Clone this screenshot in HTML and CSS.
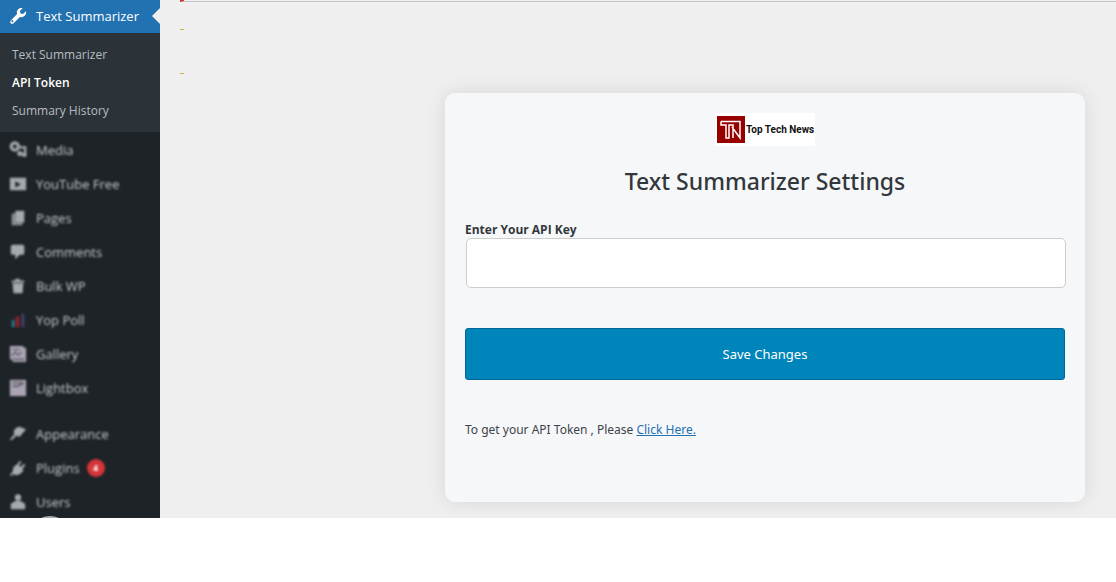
FILE: index.html
```html
<!DOCTYPE html>
<html lang="en">
<head>
<meta charset="utf-8">
<meta name="viewport" content="width=device-width, initial-scale=1">
<title>Text Summarizer Settings</title>
<link rel="stylesheet" href="styles.css">
</head>
<body>
<div class="shell">
  <nav class="sidebar" aria-label="Admin menu">
    <a class="current" href="#summarizer">
      <svg class="icon" viewBox="0 0 20 20"><path fill="currentColor" d="M16.7 9.8c-1.300 1.300-3.200 1.700-4.800 1.100L5.600 17.200c-.8.800-2 .8-2.800 0s-.8-2 0-2.800L9.100 8.100C8.500 6.500 8.800 4.600 10.200 3.300c1.200-1.300 3-1.700 4.600-1.200l-2.900 2.900.6 2.500 2.500.6L17.900 5.200c.5 1.600.1 3.400-1.200 4.600zM4.900 15.900a1 1 0 1 0-1.500-.8 1 1 0 0 0 1.500.8z"/></svg>
      <span>Text Summarizer</span>
    </a>
    <ul class="submenu">
      <li><a href="#summarizer">Text Summarizer</a></li>
      <li><a class="active" href="#token">API Token</a></li>
      <li><a href="#history">Summary History</a></li>
    </ul>
    <ul class="menu">
      <li><a href="#media"><svg class="icon" viewBox="0 0 20 20"><g fill="none" stroke="currentColor"><circle cx="6.500" cy="6" r="4" stroke-width="3.500"/><path stroke-width="2.500" d="M12 7h6v9h-3"/></g><circle cx="12" cy="14" r="2.800" fill="currentColor"/><circle cx="17" cy="15" r="2.500" fill="currentColor"/></svg><span>Media</span></a></li>
      <li><a href="#youtube"><svg class="icon" viewBox="0 0 20 20"><path fill="currentColor" fill-rule="evenodd" d="M1 3h18v14H1zM7 7v7l6-3.500z"/></svg><span>YouTube Free</span></a></li>
      <li><a href="#pages"><svg class="icon" viewBox="0 0 20 20"><path fill="currentColor" d="M7 2h10v13H7z"/><path fill="currentColor" opacity=".8" d="M3 5h4v10h8v3H3z"/></svg><span>Pages</span></a></li>
      <li><a href="#comments"><svg class="icon" viewBox="0 0 20 20"><path fill="currentColor" d="M4 2h11c1 0 2 1 2 2v7c0 1-1 2-2 2h-3l-5 5v-5H4c-1 0-2-1-2-2V4c0-1 1-2 2-2z"/></svg><span>Comments</span></a></li>
      <li><a href="#bulk"><svg class="icon" viewBox="0 0 20 20"><path fill="currentColor" d="M7 2h5v2h5v2H3V4h4zM4 7h12l-1 11H5z"/></svg><span>Bulk WP</span></a></li>
      <li><a href="#poll"><svg class="icon" viewBox="0 0 20 20"><path fill="#287a96" d="M3 10h3v8H3z"/><path fill="#7d232d" d="M7 6h5v12H7z"/><path fill="#44446a" d="M14 3h3v15h-3z"/></svg><span>Yop Poll</span></a></li>
      <li><a href="#gallery"><svg class="icon" viewBox="0 0 20 20"><path fill="#aaa4b3" d="M1 1h15v2h3v16H4v-3H1z"/><path stroke="#515159" stroke-width="1.300" fill="none" d="m3 12 4-4 3 3 4-3M4 5h8M5 16h12"/></svg><span>Gallery</span></a></li>
      <li><a href="#lightbox"><svg class="icon" viewBox="0 0 20 20"><path fill="#aaa4b3" d="M1 1h18v18H1z"/><path stroke="#515159" stroke-width="1.500" fill="none" d="M4 4h12M4 8h6l3-2h3"/></svg><span>Lightbox</span></a></li>
    </ul>
    <ul class="menu menu-last">
      <li><a href="#appearance"><svg class="icon" viewBox="0 0 20 20"><path fill="currentColor" d="m8 3 4-1 7 3-3 3-4 5-4-1-5 5-2-1 5-6-1-3z"/></svg><span>Appearance</span></a></li>
      <li><a href="#plugins"><svg class="icon" viewBox="0 0 20 20"><path fill="currentColor" d="m12 2 2 1-3 4 2 2 4-4 1 2-3 4 1 2-4 4-4 1-3-1-3 2-1-1 3-4 1-5 5-4z"/></svg><span>Plugins</span><b class="badge">4</b></a></li>
      <li><a href="#users"><svg class="icon" viewBox="0 0 20 20"><circle cx="10" cy="5" r="3.500" fill="currentColor"/><path fill="currentColor" d="M7 9h6l5 3v6H2v-6z"/></svg><span>Users</span></a></li>
    </ul>
    <span class="next-item"></span>
  </nav>
  <main class="content">
    <div class="notice-error"></div>
    <div class="notice-warning"></div>
    <form class="card">
      <svg class="logo" viewBox="0 0 100 33" role="img" aria-label="Top Tech News">
        <path fill="#fff" d="M0 0h100v33H0z"/>
        <path fill="#980000" d="M2 3h28v27H2z"/>
        <path fill="none" stroke="#fff" stroke-width="1.500" d="M6 8.500h19V25l-8-11M6 8.500V12h5v13h3V12h4v13M25 8v17"/>
        <text class="logo-text" x="31" y="20">Top Tech News</text>
      </svg>
      <h1>Text Summarizer Settings</h1>
      <label for="api-key">Enter Your API Key</label>
      <input id="api-key" type="text">
      <button type="button">Save Changes</button>
      <p>To get your API Token , Please <a href="#get-token">Click Here.</a></p>
    </form>
  </main>
</div>
</body>
</html>
```
FILE: styles.css
```css
* { box-sizing: border-box; }
body {
  margin: 0;
  background: #fff;
  color: #3c434a;
  font: 13px/20px "Segoe UI", "Open Sans", sans-serif;
}
ul { list-style: none; margin: 0; padding: 0; }
.shell {
  display: flex;
  height: calc(100vh - 64px);
  overflow: hidden;
  background: #efefef;
}
.sidebar {
  flex: 0 0 160px;
  background: #1d2327;
  overflow: hidden;
}
.sidebar a { text-decoration: none; }
.current {
  position: relative;
  display: flex;
  align-items: center;
  gap: 8px;
  height: 33px;
  padding: 0 8px 2px;
  background: #2271b1;
  color: #fff;
}
.current::after {
  content: "";
  position: absolute;
  right: 0;
  top: 8px;
  border: 8px solid transparent;
  border-left: 0;
  border-right-color: #efefef;
}
.icon { width: 20px; height: 20px; flex: none; }
.submenu { padding: 8px 12px 7px; background: #2c3338; }
.submenu a { display: block; line-height: 28px; color: #b5bcc2; font-size: 12px; }
.submenu .active { color: #fff; font-weight: 600; }
.menu { padding-top: 1px; }
.menu a {
  display: flex;
  align-items: center;
  gap: 8px;
  height: 34px;
  padding: 0 8px;
  color: #c8cbce;
}
.menu .icon { padding: 1px; filter: blur(1px); color: #a7aaad; }
.menu span { filter: blur(1px); }
.menu-last { margin-top: 11px; }
.badge {
  width: 18px;
  margin-left: -1px;
  border-radius: 9px;
  background: #d63638;
  color: #fff;
  font-size: 9px;
  line-height: 18px;
  text-align: center;
  filter: blur(1px);
}
.next-item {
  display: block;
  width: 24px;
  height: 12px;
  margin: -3px 0 0 38px;
  border-radius: 50%;
  background: #a7aaad;
}
.content { flex: 1; min-width: 0; padding-left: 20px; }
.notice-error {
  height: 2px;
  border-left: 4px solid #d63638;
  border-bottom: 1px solid #c3c4c7;
}
.notice-warning {
  width: 4px;
  height: 45px;
  margin: 27px 0 19px;
  border: solid #d5ae48;
  border-width: 1px 0;
}
.card {
  display: flex;
  flex-direction: column;
  width: calc(100% - 51px);
  max-width: 640px;
  min-height: 409px;
  margin: 0 31px 0 auto;
  padding: 20px;
  border-radius: 10px;
  background: #f6f7f9;
  box-shadow: 0 0 20px rgba(0, 0, 0, .1);
}
.logo { width: 100px; height: 33px; align-self: center; }
.logo-text { font: 700 10px Roboto, sans-serif; fill: #111; }
h1 {
  margin: 20px 0 26px;
  color: #32373c;
  font-family: "Segoe UI", "Noto Sans", sans-serif;
  font-size: 23px;
  font-weight: 500;
  line-height: 30px;
  text-align: center;
}
label { color: #32373c; font-size: 12px; font-weight: 700; line-height: 16px; }
input {
  height: 50px;
  margin: 0 -1px 0 1px;
  padding: 0 12px;
  border: 1px solid #ccc;
  border-radius: 5px;
  background: #fff;
  font: inherit;
}
button {
  height: 52px;
  margin-top: 40px;
  border: 1px solid #006799;
  border-radius: 3px;
  background: #0085ba;
  color: #fff;
  font: 13px "Segoe UI", "Noto Sans", sans-serif;
}
p { margin: 40px 0 0; font: 12px/20px "Segoe UI", "Noto Sans", sans-serif; }
p a { color: #2271b1; }
```
